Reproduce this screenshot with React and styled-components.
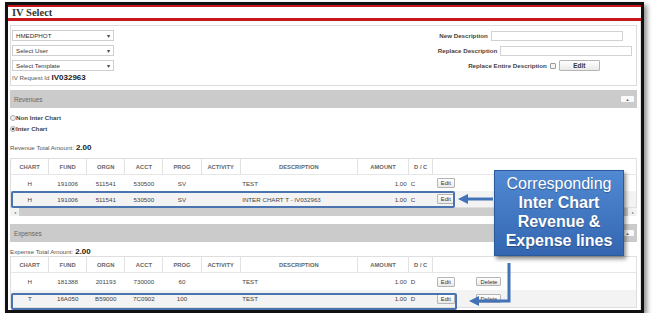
import styled, { createGlobalStyle } from 'styled-components';

const GlobalStyle = createGlobalStyle`
  html, body {
    margin: 0;
    padding: 0;
    background: #fff;
    overflow: hidden;
  }
  body {
    font-family: 'Liberation Sans', Arial, sans-serif;
    color: #333;
  }
`;

const Frame = styled.div`
  position: relative;
  box-sizing: border-box;
  margin: 2px 0 0 5px;
  width: 639px;
  height: 311px;
  border: 3px solid #111;
  box-shadow: 3px 3px 5px rgba(0, 0, 0, 0.45);
  overflow: hidden;
  background: #fff;
  display: flex;
  flex-direction: column;
`;

const TitleBar = styled.div`
  height: 11px;
  border-top: 2px solid #c8161d;
  border-bottom: 3px solid #c8161d;
  padding-left: 4px;
  display: flex;
  align-items: center;
  font-family: 'Liberation Serif', 'Times New Roman', serif;
  font-weight: bold;
  font-size: 10.5px;
  color: #333;
`;

const Content = styled.div`
  flex: 1;
  display: flex;
  flex-direction: column;
  padding: 4px 3px 0 2px;
  border-right: 1px solid #e2e2e2;
`;

const Panel = styled.div`
  box-sizing: border-box;
  height: 61px;
  border: 1px solid #dcdcdc;
  padding: 4px 0 0 1px;
  display: flex;
  justify-content: space-between;
`;

const LeftColumn = styled.div`
  display: flex;
  flex-direction: column;
  gap: 4px;
`;

const FakeSelect = styled.div`
  box-sizing: border-box;
  width: 102px;
  height: 11px;
  border: 1px solid #cfcfcf;
  padding: 0 3px;
  display: flex;
  align-items: center;
  justify-content: space-between;
  font-size: 6.2px;
  color: #333;
  &::after {
    content: '▾';
    font-size: 6px;
    color: #444;
  }
`;

const RequestLine = styled.div`
  font-size: 6.2px;
  color: #555;
  display: flex;
  align-items: baseline;
  gap: 2px;
  margin-top: -2px;
  & strong {
    font-size: 8px;
    color: #222;
  }
`;

const RightColumn = styled.div`
  width: 204px;
  display: flex;
  flex-direction: column;
  align-items: center;
  gap: 4px;
`;

const FieldRow = styled.div`
  display: flex;
  align-items: center;
  gap: 3px;
  height: 11px;
  margin-left: ${(p) => p.$shift || 0}px;
`;

const Label = styled.span`
  font-size: 6.2px;
  font-weight: bold;
  color: #444;
`;

const TextInput = styled.div`
  box-sizing: border-box;
  width: 132px;
  height: 10px;
  border: 1px solid #d2d2d2;
  background: #fff;
`;

const CheckBox = styled.span`
  box-sizing: border-box;
  width: 6px;
  height: 6px;
  border: 1px solid #9a9a9a;
  border-radius: 1px;
  background: #f4f4f4;
`;

const Button = styled.span`
  box-sizing: border-box;
  width: ${(p) => p.$w || 18}px;
  height: ${(p) => p.$h || 10}px;
  display: inline-flex;
  align-items: center;
  justify-content: center;
  border: 1px solid #b5b5b5;
  border-radius: 1px;
  background: linear-gradient(#ffffff, #e9e9e9);
  font-size: ${(p) => (p.$big ? 6.4 : 5.8)}px;
  font-weight: ${(p) => (p.$big ? 'bold' : 'normal')};
  color: #333;
`;

const SectionBar = styled.div`
  height: 18px;
  margin-top: ${(p) => p.$top}px;
  background: #cbcbcb;
  padding: 0 3px 0 4px;
  display: flex;
  align-items: center;
  justify-content: space-between;
  font-size: 6.3px;
  color: #666;
`;

const Collapse = styled.span`
  width: 13px;
  height: 6px;
  background: #fafafa;
  border-radius: 1px;
  display: flex;
  align-items: center;
  justify-content: center;
  font-size: 4px;
  color: #555;
`;

const RadioRow = styled.label`
  height: 11px;
  display: flex;
  align-items: center;
  font-size: 6.2px;
  font-weight: bold;
  color: #444;
  margin-top: ${(p) => p.$top || 0}px;
`;

const Radio = styled.span`
  box-sizing: border-box;
  width: 6px;
  height: 6px;
  border-radius: 50%;
  border: 1px solid #aaa;
  background: ${(p) => (p.$on ? 'radial-gradient(#444 0 1.2px, #eee 1.6px)' : '#f2f2f2')};
`;

const TotalLine = styled.div`
  height: 10px;
  margin-top: ${(p) => p.$top}px;
  display: flex;
  align-items: center;
  gap: 2px;
  font-size: 6.2px;
  color: #555;
  & strong {
    font-size: 8px;
    color: #222;
  }
`;

const Table = styled.table`
  box-sizing: border-box;
  width: 627px;
  margin-top: ${(p) => p.$top}px;
  border-collapse: collapse;
  table-layout: fixed;
  border: 1px solid #dedede;
  font-size: 6.2px;
  color: #444;
  & th {
    height: 15px;
    padding: 0;
    font-size: 5.8px;
    font-weight: bold;
    color: #666;
    text-align: center;
    border-right: 1px solid #e2e2e2;
    border-bottom: 1px solid #e6e6e6;
    background: #fff;
  }
  & td {
    height: ${(p) => p.$row}px;
    padding: 0 2px;
    white-space: nowrap;
    overflow: hidden;
  }
  & tbody tr:nth-child(2) td {
    background: #f3f3f3;
  }
`;

const Cell = styled.td`
  text-align: ${(p) => p.$align || 'center'};
  vertical-align: middle;
`;

const ScrollBar = styled.div`
  width: 627px;
  height: 8px;
  background: #cdcdcd;
  display: flex;
  justify-content: space-between;
  align-items: stretch;
  & span {
    width: 9px;
    background: #f2f2f2;
    display: flex;
    align-items: center;
    justify-content: center;
    font-size: 4px;
    color: #777;
  }
`;

const Callout = styled.div`
  position: absolute;
  left: 486px;
  top: 165px;
  box-sizing: border-box;
  width: 130px;
  height: 86px;
  padding-top: 3px;
  border: 1px solid #2b5a9c;
  background: linear-gradient(#5189d3, #3466b0);
  box-shadow: 2px 3px 4px rgba(0, 0, 0, 0.45);
  color: #fff;
  font-family: 'Liberation Sans', Arial, sans-serif;
  font-size: 16px;
  line-height: 19px;
  text-align: center;
  text-shadow: 0 1px 1px rgba(0, 0, 0, 0.3);
  & b {
    display: block;
  }
`;

const Highlight = styled.div`
  position: absolute;
  left: 3px;
  top: ${(p) => p.$top}px;
  width: ${(p) => p.$w}px;
  height: 17px;
  box-sizing: border-box;
  border: 2px solid #4a74b0;
  border-radius: 2px;
  pointer-events: none;
`;

const ArrowLayer = styled.svg`
  position: absolute;
  left: 0;
  top: 0;
  pointer-events: none;
`;

const cols = [38, 38, 38, 38, 38, 39, 117, 51, 24, 26, 60, 117];
const heads = ['CHART', 'FUND', 'ORGN', 'ACCT', 'PROG', 'ACTIVITY', 'DESCRIPTION', 'AMOUNT', 'D / C'];

const revenueRows = [
  ['H', '191006', '511541', '530500', 'SV', '', 'TEST', '1.00', 'C'],
  ['H', '191006', '511541', '530500', 'SV', '', 'INTER CHART T - IV032963', '1.00', 'C'],
];

const expenseRows = [
  ['H', '181388', '201193', '730000', '60', '', 'TEST', '1.00', 'D'],
  ['T', '16A050', 'B59000', '7C0902', '100', '', 'TEST', '1.00', 'D'],
];

const alignFor = (j) => (j === 6 || j === 8 ? 'left' : j === 7 ? 'right' : 'center');

const LineTable = ({ rows, row, top, withDelete }) => (
  <Table $row={row} $top={top}>
    <colgroup>
      {cols.map((w, i) => (
        <col key={i} style={{ width: w }} />
      ))}
    </colgroup>
    <thead>
      <tr>
        {heads.map((h) => (
          <th key={h}>{h}</th>
        ))}
        <th colSpan={3} />
      </tr>
    </thead>
    <tbody>
      {rows.map((r, i) => (
        <tr key={i}>
          {r.map((v, j) => (
            <Cell key={j} $align={alignFor(j)}>
              {v}
            </Cell>
          ))}
          <Cell>
            <Button>Edit</Button>
          </Cell>
          <Cell>{withDelete && <Button $w={25} $h={9}>Delete</Button>}</Cell>
          <Cell />
        </tr>
      ))}
    </tbody>
  </Table>
);

const App = () => (
  <>
    <GlobalStyle />
    <Frame>
      <TitleBar>IV Select</TitleBar>
      <Content>
        <Panel>
          <LeftColumn>
            <FakeSelect>HMEDPHOT</FakeSelect>
            <FakeSelect>Select User</FakeSelect>
            <FakeSelect>Select Template</FakeSelect>
            <RequestLine>
              IV Request Id <strong>IV032963</strong>
            </RequestLine>
          </LeftColumn>
          <RightColumn>
            <FieldRow $shift={-6}>
              <Label>New Description</Label>
              <TextInput />
            </FieldRow>
            <FieldRow $shift={2}>
              <Label>Replace Description</Label>
              <TextInput />
            </FieldRow>
            <FieldRow>
              <Label>Replace Entire Description</Label>
              <CheckBox />
              <Button $w={41} $h={11} $big>
                Edit
              </Button>
            </FieldRow>
          </RightColumn>
        </Panel>

        <SectionBar $top={4}>
          Revenues
          <Collapse>▲</Collapse>
        </SectionBar>
        <RadioRow $top={4}>
          <Radio />
          Non Inter Chart
        </RadioRow>
        <RadioRow>
          <Radio $on />
          Inter Chart
        </RadioRow>
        <TotalLine $top={8}>
          Revenue Total Amount: <strong>2.00</strong>
        </TotalLine>
        <LineTable rows={revenueRows} row={16} top={6} />
        <ScrollBar>
          <span>◂</span>
          <span>▸</span>
        </ScrollBar>

        <SectionBar $top={8}>
          Expenses
          <Collapse>▲</Collapse>
        </SectionBar>
        <TotalLine $top={4}>
          Expense Total Amount: <strong>2.00</strong>
        </TotalLine>
        <LineTable rows={expenseRows} row={17} top={0} withDelete />
      </Content>

      <Highlight $top={186} $w={444} />
      <Highlight $top={288} $w={446} />

      <Callout>
        Corresponding
        <b>Inter Chart</b>
        <b>Revenue &amp;</b>
        <b>Expense lines</b>
      </Callout>

      <ArrowLayer width="633" height="305" viewBox="0 0 633 305">
        <g fill="#4373b6" stroke="#4373b6">
          <line x1="485" y1="194" x2="458" y2="194" strokeWidth="3" />
          <polygon points="450,194 460,189 460,199" stroke="none" />
          <polyline points="501,258 501,296 468,296" fill="none" strokeWidth="3" />
          <polygon points="461,296 471,291 471,301" stroke="none" />
        </g>
      </ArrowLayer>
    </Frame>
  </>
);

export default App;
